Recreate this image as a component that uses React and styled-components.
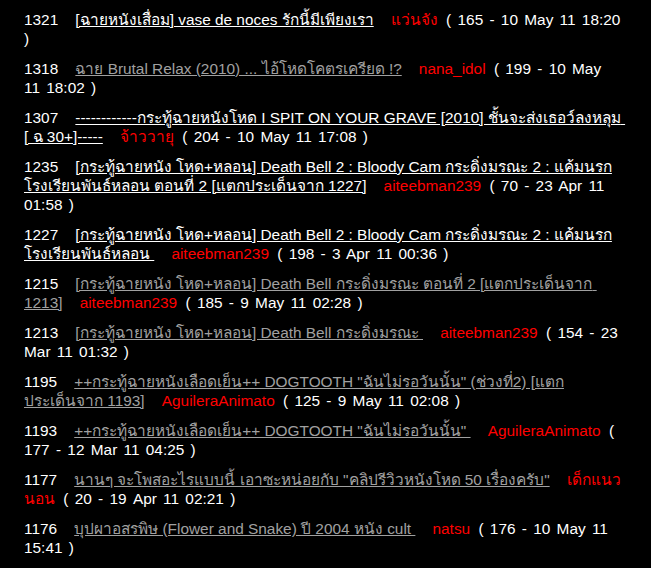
import styled, { createGlobalStyle } from "styled-components";

const GlobalStyle = createGlobalStyle`
  html, body {
    margin: 0;
    background: #000;
  }
`;

const TopicList = styled.div`
  background: #000;
  min-height: 568px;
  box-sizing: border-box;
  padding: 10px 0 0 24px;
  width: 622px;
  font-family: "Liberation Sans", Arial, sans-serif;
  font-size: 15.4px;
  line-height: 19px;
  color: #fff;
`;

const Topic = styled.div`
  margin-bottom: 11px;
`;

const TopicLink = styled.a`
  color: ${(p) => (p.$visited ? "#a0a0a0" : "#fff")};
  text-decoration: underline;
  white-space: pre-wrap;
`;

const Author = styled.span`
  color: #f00;
`;

const Meta = styled.span`
  margin-left: 2px;
  word-spacing: 2px;
`;

const topics = [
  { id: 1321, title: "[ฉายหนังเสื่อม] vase de noces รักนี้มีเพียงเรา", author: "แว่นจัง", meta: "165 - 10 May 11 18:20" },
  { id: 1318, title: "ฉาย Brutal Relax (2010) ... ไอ้โหดโคตรเครียด !?", author: "nana_idol", meta: "199 - 10 May 11 18:02", visited: true },
  { id: 1307, title: "------------กระทู้ฉายหนังโหด I SPIT ON YOUR GRAVE [2010] ชั้นจะส่งเธอว์ลง\u200bหลุม [ ฉ 30+]-----", author: "จ้าววายุ", meta: "204 - 10 May 11 17:08" },
  { id: 1235, title: "[กระทู้ฉายหนัง โหด+หลอน] Death Bell 2 : Bloody Cam กระดิ่งมรณะ 2 : แค้มนรก\u200bโรงเรียนพันธ์หลอน ตอนที่ 2 [แตกประเด็นจาก 1227]", author: "aiteebman239", meta: "70 - 23 Apr 11 01:58" },
  { id: 1227, title: "[กระทู้ฉายหนัง โหด+หลอน] Death Bell 2 : Bloody Cam กระดิ่งมรณะ 2 : แค้มนรก\u200bโรงเรียนพันธ์หลอน ", author: "aiteebman239", meta: "198 - 3 Apr 11 00:36" },
  { id: 1215, title: "[กระทู้ฉายหนัง โหด+หลอน] Death Bell กระดิ่งมรณะ ตอนที่ 2 [แตกประเด็นจาก 1213]", author: "aiteebman239", meta: "185 - 9 May 11 02:28", visited: true },
  { id: 1213, title: "[กระทู้ฉายหนัง โหด+หลอน] Death Bell กระดิ่งมรณะ ", author: "aiteebman239", meta: "154 - 23 Mar 11 01:32", visited: true },
  { id: 1195, title: "++กระทู้ฉายหนังเลือดเย็น++ DOGTOOTH \"ฉันไม่รอวันนั้น\" (ช่วงที่2) [แตก\u200bประเด็น\u2060จาก 1193]", author: "AguileraAnimato", meta: "125 - 9 May 11 02:08", visited: true },
  { id: 1193, title: "++กระทู้ฉายหนังเลือดเย็น++ DOGTOOTH \"ฉันไม่รอวันนั้น\" ", author: "AguileraAnimato", meta: "177 - 12 Mar 11 04:25", visited: true },
  { id: 1177, title: "นานๆ จะโพสอะไรแบบนี้ เอาซะหน่อยกับ \"คลิปรีวิวหนังโหด 50 เรื่องครับ\"", author: "เด็กแนว\u200bนอน", meta: "20 - 19 Apr 11 02:21", visited: true },
  { id: 1176, title: "บุปผาอสรพิษ (Flower and Snake) ปี 2004 หนัง cult ", author: "natsu", meta: "176 - 10 May 11 15:41", visited: true },
];

export default function App() {
  return (
    <>
      <GlobalStyle />
      <TopicList>
        {topics.map((t) => (
          <Topic key={t.id}>
            {t.id}{"\u00a0\u00a0\u00a0 "}
            <TopicLink href="#" $visited={t.visited}>{t.title}</TopicLink>
            {"\u00a0\u00a0\u00a0 "}
            <Author>{t.author}</Author>
            <Meta> ( {t.meta} )</Meta>
          </Topic>
        ))}
      </TopicList>
    </>
  );
}
